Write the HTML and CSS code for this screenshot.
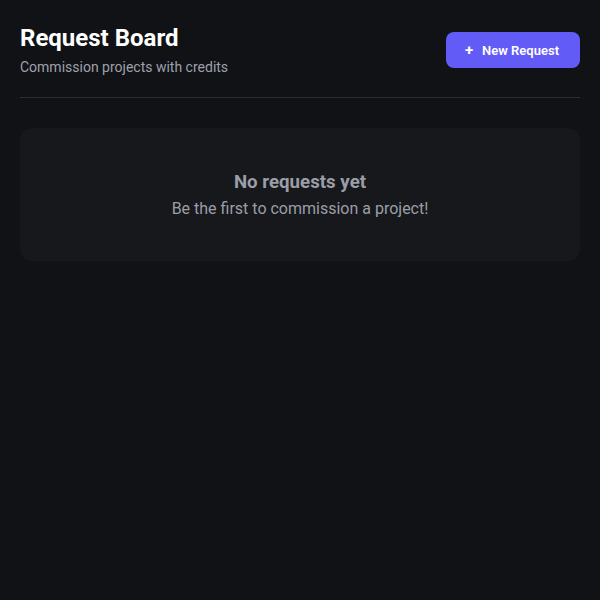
FILE: index.html
```html
<!DOCTYPE html>
<html lang="en">
<head>
<meta charset="utf-8">
<title>Request Board</title>
<link rel="stylesheet" href="styles.css">
</head>
<body>
<main class="page">
  <header class="header">
    <div class="heading">
      <h1 class="title">Request Board</h1>
      <p class="subtitle">Commission projects with credits</p>
    </div>
    <button class="new-btn" type="button"><span class="plus">+</span>New Request</button>
  </header>
  <section class="empty">
    <h2 class="empty-title">No requests yet</h2>
    <p class="empty-text">Be the first to commission a project!</p>
  </section>
</main>
</body>
</html>
```
FILE: styles.css
```css
* { box-sizing: border-box; }
html, body {
  margin: 0;
  background: #111216;
  font-family: Roboto, "Noto Sans", "Liberation Sans", sans-serif;
  height: 100%;
}
.page {
  padding: 23px 20px 20px;
}
.header {
  display: flex;
  justify-content: space-between;
  align-items: center;
  padding-bottom: 20px;
  border-bottom: 1px solid #2c2d33;
}
.title {
  margin: 0;
  font-size: 24px;
  line-height: 30px;
  font-weight: 700;
  color: #ffffff;
}
.subtitle {
  margin: 4px 0 0;
  font-size: 14px;
  line-height: 20px;
  color: #9ea1aa;
}
.new-btn {
  display: flex;
  align-items: center;
  gap: 9px;
  height: 36px;
  padding: 0 21px 0 19px;
  border: 0;
  border-radius: 8px;
  background: #635bf6;
  color: #ffffff;
  font-family: inherit;
  font-size: 13px;
  font-weight: 600;
}
.plus {
  font-size: 15px;
  font-weight: 700;
}
.empty {
  margin-top: 30px;
  padding: 42px 20px 40px;
  border-radius: 12px;
  background: #17181c;
  text-align: center;
}
.empty-title {
  margin: 0;
  font-size: 18.7px;
  line-height: 25px;
  font-weight: 700;
  color: #9b9ea7;
}
.empty-text {
  margin: 2px 0 0;
  font-size: 16px;
  line-height: 24px;
  color: #9b9ea7;
}
```
